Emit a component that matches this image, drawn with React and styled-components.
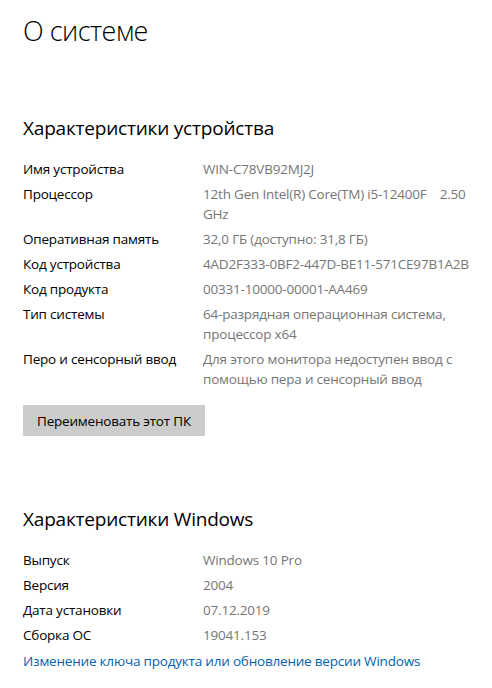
import styled, { createGlobalStyle } from "styled-components";

const GlobalStyle = createGlobalStyle`
  body {
    margin: 0;
    background: #fff;
    font-family: "Open Sans", "Noto Sans", sans-serif;
    color: #000;
  }
`;

const deviceSpecs = [
  { label: "Имя устройства", value: "WIN-C78VB92MJ2J" },
  { label: "Процессор", value: "12th Gen Intel(R) Core(TM) i5-12400F    2.50\nGHz" },
  { label: "Оперативная память", value: "32,0 ГБ (доступно: 31,8 ГБ)" },
  { label: "Код устройства", value: "4AD2F333-0BF2-447D-BE11-571CE97B1A2B" },
  { label: "Код продукта", value: "00331-10000-00001-AA469" },
  { label: "Тип системы", value: "64-разрядная операционная система,\nпроцессор x64" },
  {
    label: "Перо и сенсорный ввод",
    value: "Для этого монитора недоступен ввод с\nпомощью пера и сенсорный ввод",
  },
];

const windowsSpecs = [
  { label: "Выпуск", value: "Windows 10 Pro" },
  { label: "Версия", value: "2004" },
  { label: "Дата установки", value: "07.12.2019" },
  { label: "Сборка ОС", value: "19041.153" },
];

const SpecList = ({ items }) => (
  <Specs>
    {items.map((item) => (
      <SpecRow key={item.label}>
        <Label>{item.label}</Label>
        <Value>{item.value}</Value>
      </SpecRow>
    ))}
  </Specs>
);

const App = () => {
  return (
    <Page>
      <GlobalStyle />
      <Title>О системе</Title>

      <SectionTitle>Характеристики устройства</SectionTitle>
      <SpecList items={deviceSpecs} />
      <RenameButton>Переименовать этот ПК</RenameButton>

      <SectionTitle $top={69}>Характеристики Windows</SectionTitle>
      <SpecList items={windowsSpecs} />
      <Link href="#">Изменение ключа продукта или обновление версии Windows</Link>
    </Page>
  );
};

export default App;

const Page = styled.div`
  display: flex;
  flex-direction: column;
  align-items: flex-start;
  padding: 11px 0 20px 23px;
  width: 492px;
  box-sizing: border-box;
`;

const Title = styled.h1`
  margin: 0;
  font-size: 27px;
  font-weight: 300;
  letter-spacing: -0.5px;
  line-height: 40px;
`;

const SectionTitle = styled.h2`
  margin: ${({ $top }) => $top || 63}px 0 0;
  font-size: 19px;
  font-weight: 400;
  letter-spacing: -0.2px;
  line-height: 28px;
`;

const Specs = styled.div`
  display: flex;
  flex-direction: column;
  gap: 5px;
  margin-top: 17px;
  font-size: 13.5px;
  letter-spacing: -0.2px;
  line-height: 20px;
`;

const SpecRow = styled.div`
  display: grid;
  grid-template-columns: 180px 1fr;
`;

const Label = styled.div`
  color: #000;
`;

const Value = styled.div`
  color: #767676;
  white-space: pre-wrap;
`;

const RenameButton = styled.button`
  margin-top: 16px;
  height: 31px;
  padding: 0 14px;
  border: none;
  background: #cccccc;
  font-family: inherit;
  font-size: 13.5px;
  letter-spacing: -0.2px;
  color: #000;
  cursor: pointer;
`;

const Link = styled.a`
  margin-top: 6px;
  font-size: 13.5px;
  letter-spacing: -0.2px;
  line-height: 20px;
  color: #0063b1;
  text-decoration: none;
`;
